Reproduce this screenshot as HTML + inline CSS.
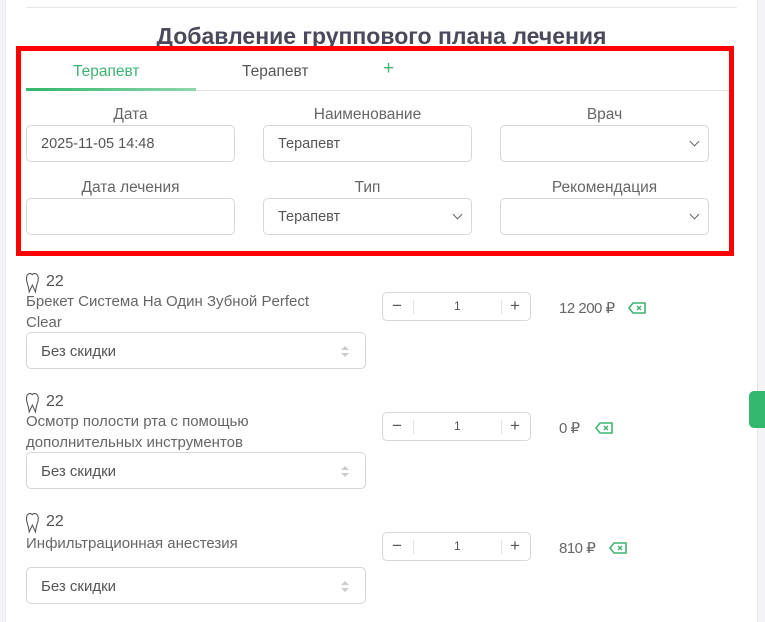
<!DOCTYPE html>
<html><head><meta charset="utf-8"><style>
*{box-sizing:border-box;margin:0;padding:0}
body{width:765px;height:622px;overflow:hidden;background:#f4f4f6;font-family:"Liberation Sans",sans-serif;color:#555;position:relative}
.card{position:absolute;left:5px;top:0;width:753px;height:622px;background:#fff;border-left:1px solid #ececf0;border-right:1px solid #e6e6ec}
.a{position:absolute}
.topline{left:26px;top:7px;width:711px;height:1px;background:#e6e6ea}
.title{left:0;width:763px;top:23px;text-align:center;font-size:23px;font-weight:bold;color:#4a4a5c}
.red{left:16px;top:46px;width:718px;height:210px;border:5px solid #f00}
.lbl{font-size:15.5px;color:#666;text-align:center;width:209px}
.inp{width:209px;height:37px;border:1px solid #d6d6dc;border-radius:5px;font-size:14.5px;color:#555;padding:10px 14px;background:#fff}
.chev{position:absolute;right:10px;top:12px;width:7px;height:7px;border-right:1.3px solid #666;border-bottom:1.3px solid #666;transform:rotate(45deg)}
.sel{width:340px;height:37px;border:1px solid #d6d6dc;border-radius:5px;font-size:15px;color:#555;padding:10px 14px}
.ud{position:absolute;right:16px;top:13px;width:8px;height:11px}
.cnt{width:149px;height:29px;border:1px solid #d6d6dc;border-radius:5px}
.cnt span{position:absolute;top:3px;font-size:17px;color:#555}
.cnt i{position:absolute;top:7px;width:1px;height:14px;background:#e0e0e4}
.price{font-size:15px;color:#666;letter-spacing:-0.5px}
.name{font-size:15px;color:#666;line-height:21px;width:310px}
.num{font-size:16px;color:#555}
</style></head><body>
<div class="card"></div>
<div class="a topline"></div>
<div class="a title">Добавление группового плана лечения</div>
<div class="a" style="left:73px;top:63px;font-size:15.5px;color:#3cb371">Терапевт</div>
<div class="a" style="left:242px;top:63px;font-size:15.5px;color:#555">Терапевт</div>
<div class="a" style="left:383px;top:58px;font-size:19px;color:#3cb371">+</div>
<div class="a" style="left:26px;top:90px;width:708px;height:1px;background:#e4e4e8"></div>
<div class="a" style="left:26px;top:88px;width:170px;height:3px;background:linear-gradient(90deg,#2fb76a,#8fd7ad)"></div>
<div class="a red"></div>

<div class="a lbl" style="left:26px;top:106px">Дата</div>
<div class="a lbl" style="left:263px;top:106px">Наименование</div>
<div class="a lbl" style="left:500px;top:106px">Врач</div>
<div class="a inp" style="left:26px;top:125px">2025-11-05 14:48</div>
<div class="a inp" style="left:263px;top:125px">Терапевт</div>
<div class="a inp" style="left:500px;top:125px"><div class="chev"></div></div>
<div class="a lbl" style="left:26px;top:179px">Дата лечения</div>
<div class="a lbl" style="left:263px;top:179px">Тип</div>
<div class="a lbl" style="left:500px;top:179px">Рекомендация</div>
<div class="a inp" style="left:26px;top:198px"></div>
<div class="a inp" style="left:263px;top:198px">Терапевт<div class="chev"></div></div>
<div class="a inp" style="left:500px;top:198px"><div class="chev"></div></div>

<svg class="a" style="left:25px;top:272px" width="21" height="22" viewBox="0 0 20 20"><path d="M5 1C2 1 1 4 1.5 7.5c.5 3 2 5 2.5 11l3-6.5 3 6.5c.5-6 2-8 2.5-11C13 4 12 1 9 1 7.5 1 7 2 7 2S6 1 5 1z" fill="none" stroke="#555" stroke-width="1"/></svg>
<div class="a num" style="left:46px;top:273px">22</div>
<div class="a name" style="left:26px;top:291px">Брекет Система На Один Зубной Perfect Clear</div>
<div class="a sel" style="left:26px;top:332px">Без скидки<svg class="ud" viewBox="0 0 8 11"><path d="M0 4L4 0 8 4zM0 7h8L4 11z" fill="#ccc"/></svg></div>
<div class="a cnt" style="left:382px;top:292px"><span style="left:9px">−</span><i style="left:30px"></i><span style="left:71px;font-size:12px;top:6px">1</span><i style="left:118px"></i><span style="left:127px">+</span></div>
<div class="a price" style="left:559px;top:299px">12 200 ₽</div>
<svg class="a" style="left:628px;top:302px" width="18" height="12" viewBox="0 0 18 12"><path d="M5 1h12v10H5L1 6z" fill="none" stroke="#3cb371" stroke-width="1.6"/><path d="M9 4l4 4M13 4l-4 4" stroke="#3cb371" stroke-width="1.4"/></svg>

<svg class="a" style="left:25px;top:392px" width="21" height="22" viewBox="0 0 20 20"><path d="M5 1C2 1 1 4 1.5 7.5c.5 3 2 5 2.5 11l3-6.5 3 6.5c.5-6 2-8 2.5-11C13 4 12 1 9 1 7.5 1 7 2 7 2S6 1 5 1z" fill="none" stroke="#555" stroke-width="1"/></svg>
<div class="a num" style="left:46px;top:393px">22</div>
<div class="a name" style="left:26px;top:411px">Осмотр полости рта с помощью дополнительных инструментов</div>
<div class="a sel" style="left:26px;top:452px">Без скидки<svg class="ud" viewBox="0 0 8 11"><path d="M0 4L4 0 8 4zM0 7h8L4 11z" fill="#ccc"/></svg></div>
<div class="a cnt" style="left:382px;top:412px"><span style="left:9px">−</span><i style="left:30px"></i><span style="left:71px;font-size:12px;top:6px">1</span><i style="left:118px"></i><span style="left:127px">+</span></div>
<div class="a price" style="left:559px;top:419px">0 ₽</div>
<svg class="a" style="left:595px;top:422px" width="18" height="12" viewBox="0 0 18 12"><path d="M5 1h12v10H5L1 6z" fill="none" stroke="#3cb371" stroke-width="1.6"/><path d="M9 4l4 4M13 4l-4 4" stroke="#3cb371" stroke-width="1.4"/></svg>

<svg class="a" style="left:25px;top:512px" width="21" height="22" viewBox="0 0 20 20"><path d="M5 1C2 1 1 4 1.5 7.5c.5 3 2 5 2.5 11l3-6.5 3 6.5c.5-6 2-8 2.5-11C13 4 12 1 9 1 7.5 1 7 2 7 2S6 1 5 1z" fill="none" stroke="#555" stroke-width="1"/></svg>
<div class="a num" style="left:46px;top:513px">22</div>
<div class="a name" style="left:26px;top:533px">Инфильтрационная анестезия</div>
<div class="a sel" style="left:26px;top:567px">Без скидки<svg class="ud" viewBox="0 0 8 11"><path d="M0 4L4 0 8 4zM0 7h8L4 11z" fill="#ccc"/></svg></div>
<div class="a cnt" style="left:382px;top:532px"><span style="left:9px">−</span><i style="left:30px"></i><span style="left:71px;font-size:12px;top:6px">1</span><i style="left:118px"></i><span style="left:127px">+</span></div>
<div class="a price" style="left:559px;top:539px">810 ₽</div>
<svg class="a" style="left:609px;top:542px" width="18" height="12" viewBox="0 0 18 12"><path d="M5 1h12v10H5L1 6z" fill="none" stroke="#3cb371" stroke-width="1.6"/><path d="M9 4l4 4M13 4l-4 4" stroke="#3cb371" stroke-width="1.4"/></svg>

<div class="a" style="left:749px;top:391px;width:20px;height:37px;background:#33b66d;border-radius:5px 0 0 5px"></div>
</body></html>
